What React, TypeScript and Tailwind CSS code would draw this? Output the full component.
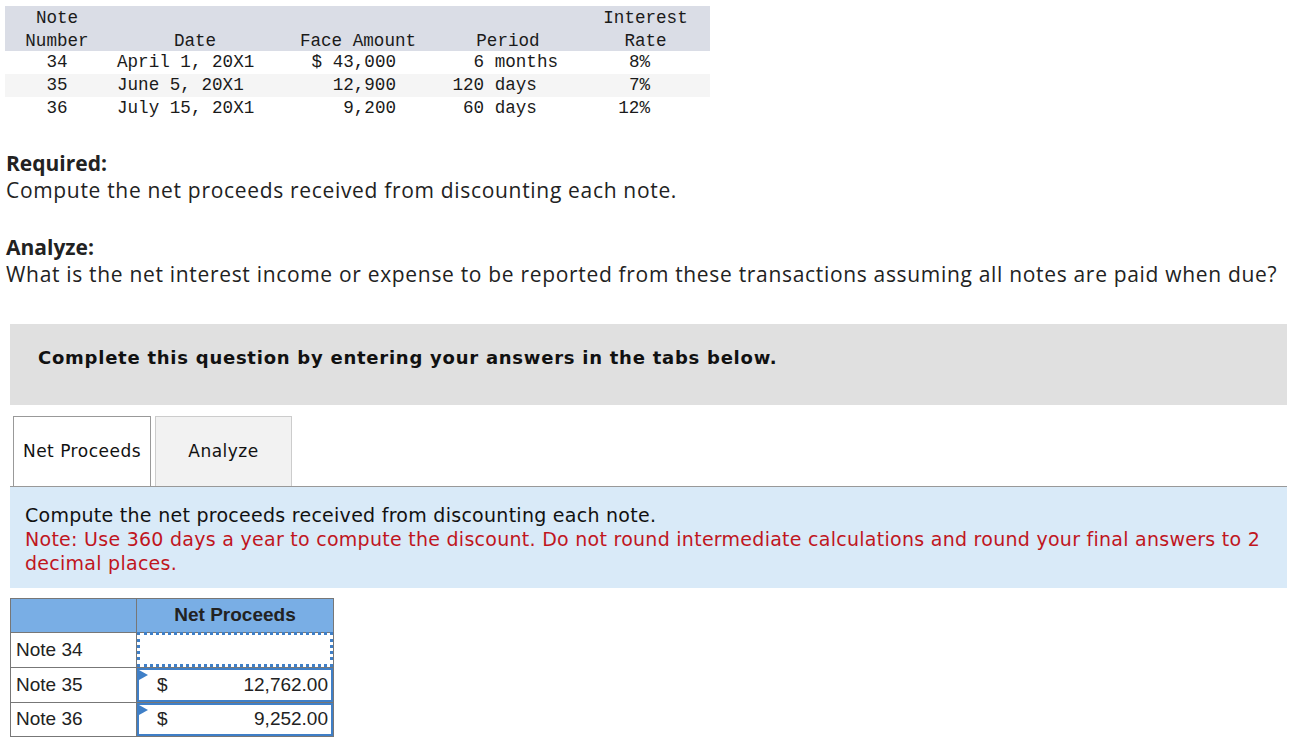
import React from "react";

const mono = { fontFamily: '"Liberation Mono", monospace' };

function Row({ bg, cells }: { bg: string; cells: React.ReactNode[] }) {
  return (
    <div className={`grid grid-cols-[104px_172px_154px_146px_129px] h-[23px] leading-[23px] ${bg}`}>
      {cells}
    </div>
  );
}

export default function App() {
  const rows = [
    ["34", "April 1, 20X1", "$ 43,000", "6 months", "8%"],
    ["35", "June 5, 20X1", "12,900", "120 days  ", "7%"],
    ["36", "July 15, 20X1", "9,200", "60 days  ", "12%"],
  ];
  const sans = { fontFamily: '"Open Sans", sans-serif' };
  const verd = { fontFamily: '"DejaVu Sans", sans-serif' };
  return (
    <div className="bg-white w-[1294px] h-[744px] overflow-hidden text-black">
      {/* Top data table */}
      <div className="ml-[5px] mt-[6px] w-[705px] text-[17.6px] text-[#1a1a1a]" style={mono}>
        <div className="grid grid-cols-[104px_172px_154px_146px_129px] bg-[#dadde6] h-[45px] leading-[22.5px] pt-[1px]">
          <div className="text-center">Note<br />Number</div>
          <div className="text-center pt-[22.5px]">Date</div>
          <div className="text-center pt-[22.5px]">Face Amount</div>
          <div className="text-center pt-[22.5px]">Period</div>
          <div className="text-center">Interest<br />Rate</div>
        </div>
        {rows.map((r, i) => (
          <Row
            key={i}
            bg={i === 1 ? "bg-[#f5f5f5]" : "bg-white"}
            cells={[
              <div key="a" className="text-center">{r[0]}</div>,
              <div key="b" className="pl-[8px] whitespace-pre">{r[1]}</div>,
              <div key="c" className="text-right pr-[39px] whitespace-pre">{r[2]}</div>,
              <div key="d" className="text-right pr-[23px] whitespace-pre">{r[3]}</div>,
              <div key="e" className="text-right pr-[60px] whitespace-pre">{r[4]}</div>,
            ]}
          />
        ))}
      </div>

      {/* Required */}
      <div className="ml-[6px] mt-[30px] text-[21px] leading-[27px] text-[#222]" style={sans}>
        <div className="font-bold">Required:</div>
        <div className="tracking-[0.68px]">Compute the net proceeds received from discounting each note.</div>
      </div>

      {/* Analyze */}
      <div className="ml-[6px] mt-[30px] text-[21px] leading-[27px] text-[#222]" style={sans}>
        <div className="font-bold">Analyze:</div>
        <div className="tracking-[0.68px] whitespace-nowrap">What is the net interest income or expense to be reported from these transactions assuming all notes are paid when due?</div>
      </div>

      {/* Gray instruction box */}
      <div className="ml-[10px] mt-[36px] w-[1277px] h-[81px] bg-[#e0e0e0] pl-[28px] pt-[22px]">
        <span className="font-bold text-[18px] tracking-[0.75px] text-[#111] leading-[24px]" style={verd}>
          Complete this question by entering your answers in the tabs below.
        </span>
      </div>

      {/* Tabs */}
      <div className="ml-[10px] mt-[11px] w-[1277px]" style={verd}>
        <div className="flex gap-[4px] pl-[3px] border-b border-[#999]">
          <div className="w-[138px] h-[70px] bg-white border border-b-0 border-[#999] flex items-center justify-center text-[17px] tracking-[0.5px] text-[#111]">
            Net Proceeds
          </div>
          <div className="w-[137px] h-[70px] bg-[#f2f2f2] border border-b-0 border-[#ccc] flex items-center justify-center text-[17px] tracking-[0.5px] text-[#111]">
            Analyze
          </div>
        </div>
        <div className="bg-[#d9eaf8] h-[101px] pl-[15px] pr-[15px] pt-[16px] text-[19px] tracking-[0.27px] leading-[24px]">
          <div className="text-[#111]">Compute the net proceeds received from discounting each note.</div>
          <div className="text-[#c0161e]">
            Note: Use 360 days a year to compute the discount. Do not round intermediate calculations and round your final answers to 2 decimal places.
          </div>
        </div>
      </div>

      {/* Answer table */}
      <div className="ml-[10px] mt-[10px] w-[324px] border border-[#777] text-[19px] text-[#222]" style={{ fontFamily: '"Liberation Sans", Arial, sans-serif' }}>
        <div className="grid grid-cols-[126px_196px] h-[33px] bg-[#79aee5]">
          <div className="border-r border-[#777]"></div>
          <div className="flex items-center justify-center font-bold">Net Proceeds</div>
        </div>
        <div className="grid grid-cols-[126px_196px] h-[35px] border-t border-[#777]">
          <div className="border-r border-[#777] flex items-center pl-[5px]">Note 34</div>
          <div className="border-[3px] border-dotted border-[#3f7fc7] -mt-[1px]"></div>
        </div>
        <div className="grid grid-cols-[126px_196px] h-[35px] border-t border-[#777]">
          <div className="border-r border-[#777] flex items-center pl-[5px]">Note 35</div>
          <div className="relative border-2 border-[#3f7fc7] flex items-center justify-between pl-[18px] pr-[3px]">
            <span className="absolute left-0 top-0 w-0 h-0 border-t-[5px] border-b-[5px] border-l-[9px] border-t-transparent border-b-transparent border-l-[#3f7fc7]"></span>
            <span>$</span>
            <span>12,762.00</span>
          </div>
        </div>
        <div className="grid grid-cols-[126px_196px] h-[34px] border-t border-[#777]">
          <div className="border-r border-[#777] flex items-center pl-[5px]">Note 36</div>
          <div className="relative border-2 border-[#3f7fc7] flex items-center justify-between pl-[18px] pr-[3px]">
            <span className="absolute left-0 top-0 w-0 h-0 border-t-[5px] border-b-[5px] border-l-[9px] border-t-transparent border-b-transparent border-l-[#3f7fc7]"></span>
            <span>$</span>
            <span>9,252.00</span>
          </div>
        </div>
      </div>
    </div>
  );
}
